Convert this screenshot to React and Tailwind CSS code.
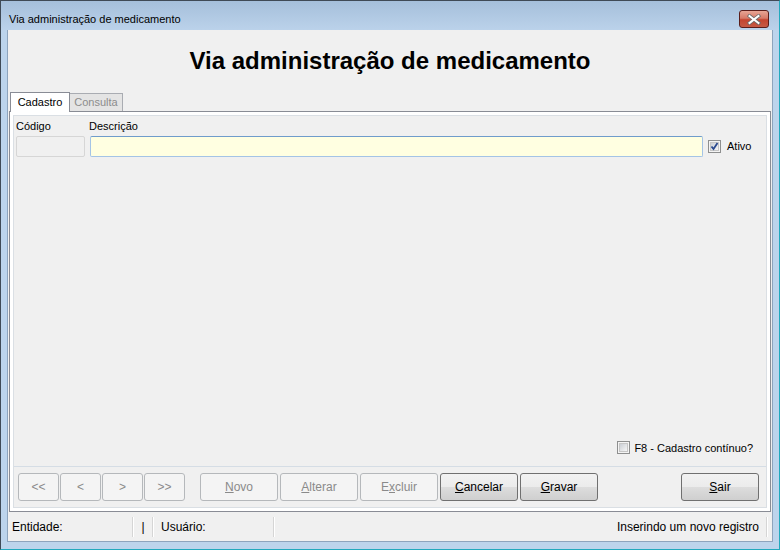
import React from "react";

const font = { fontFamily: '"Liberation Sans", Arial, sans-serif' };

const Checkbox = ({ checked }) => (
    <div className="relative w-[13px] h-[13px] border border-[#8e8f8f] bg-[#f4f4f4] flex items-center justify-center">
        <div className="w-[9px] h-[9px] border border-[#c6c6c6] bg-gradient-to-br from-[#cbcfd5] to-[#f6f6f6]" />
        {checked && (
            <svg className="absolute inset-0" width="11" height="11" viewBox="0 0 11 11">
                <path d="M2.5 5.5 L4.5 8 L8.5 2" fill="none" stroke="#2b4a8f" strokeWidth="1.8" />
            </svg>
        )}
    </div>
);

const Btn = ({ children, w = "w-[78px]", enabled }) => (
    <div
        className={`${w} h-[28px] rounded-[3px] border flex items-center justify-center text-[12px] ${
            enabled
                ? "border-[#707070] text-black bg-[linear-gradient(#f2f2f2_0%,#ebebeb_50%,#dddddd_50%,#cfcfcf_100%)]"
                : "border-[#b5b8bb] text-[#8a8a8a] bg-[#f4f4f4]"
        }`}
    >
        {children}
    </div>
);

const Sep = () => <div className="w-[2px] h-[20px] border-l border-[#d5d5d5] border-r border-r-white" />;

export default function App() {
    return (
        <div className="w-[780px] h-[550px] flex flex-col bg-[#bcd4ec] border-t border-l border-[#3f4a56] border-r border-b border-r-[#22a9bd] border-b-[#22a9bd]" style={font}>
            {/* Title bar */}
            <div className="h-[29px] flex justify-between bg-[linear-gradient(#a5bfdb,#bbd2ea)]">
                <div className="pl-[8px] pt-[11px] text-[11px] leading-[14px] text-black">Via administração de medicamento</div>
                <div className="mt-[9px] mr-[10px] w-[30px] h-[18px] rounded-[3px] border border-[#5a1d1a] bg-[linear-gradient(#e7a595_0%,#d77a68_45%,#c4442f_55%,#c55a45_100%)] flex items-center justify-center">
                    <svg width="16" height="11" viewBox="0 0 16 11">
                        <path d="M3.5 2 L12.5 9 M12.5 2 L3.5 9" stroke="#6a6a6a" strokeWidth="3.6" strokeLinecap="square" />
                        <path d="M3.5 2 L12.5 9 M12.5 2 L3.5 9" stroke="#ffffff" strokeWidth="2" strokeLinecap="square" />
                    </svg>
                </div>
            </div>

            {/* Client area */}
            <div className="flex-1 mx-[6px] mb-[7px] flex flex-col bg-[#f0f0f0] border-l border-r border-b border-[#8da4bd]">
                <div className="h-[62px] flex items-center justify-center text-[24px] font-bold text-black">
                    Via administração de medicamento
                </div>

                {/* Tabs */}
                <div className="h-[19px] flex items-end pl-[2px] relative z-10">
                    <div className="w-[60px] h-[20px] -mb-px bg-white border border-b-0 border-[#898c95] flex items-center justify-center text-[11px] text-black">
                        Cadastro
                    </div>
                    <div className="w-[53px] h-[18px] bg-[#e4e4e4] border border-l-0 border-b-0 border-[#a9acb2] flex items-center justify-center text-[11px] text-[#8c8c8c]">
                        Consulta
                    </div>
                </div>

                {/* Tab panel */}
                <div className="h-[401px] ml-[1px] mr-[1px] border border-[#898c95] bg-white p-[3px] flex">
                    <div className="flex-1 flex flex-col bg-[#f0f0f0] border border-[#dadfe4]">
                        <div className="flex pl-[2px] pt-[3px] text-[11px] text-black">
                            <div className="flex flex-col w-[69px]">
                                <div className="h-[15px] leading-[15px]">Código</div>
                                <div className="mt-[2px] h-[21px] border border-[#d6d6d6] bg-[#f0f0f0] rounded-[2px]" />
                            </div>
                            <div className="flex flex-col ml-[5px]">
                                <div className="h-[15px] leading-[15px] -ml-px">Descrição</div>
                                <div className="mt-[2px] w-[613px] h-[21px] border border-[#a4c4e6] border-t-[#6f9ccb] bg-[#ffffe1] rounded-[2px]" />
                            </div>
                            <div className="flex items-center ml-[5px] mt-[17px] h-[21px] gap-[6px]">
                                <Checkbox checked />
                                <span>Ativo</span>
                            </div>
                        </div>

                        <div className="flex-1" />

                        <div className="flex justify-end items-center gap-[4px] pr-[13px] pb-[10px] text-[11px] text-black">
                            <Checkbox />
                            <span>F8 - Cadastro contínuo?</span>
                        </div>

                        <div className="border-t border-[#d5dde5] pt-[6px] pb-[6px] pl-[4px] pr-[7px] flex items-center">
                            <div className="flex gap-[1px]">
                                <Btn w="w-[41px]">&lt;&lt;</Btn>
                                <Btn w="w-[41px]">&lt;</Btn>
                                <Btn w="w-[41px]">&gt;</Btn>
                                <Btn w="w-[41px]">&gt;&gt;</Btn>
                            </div>
                            <div className="flex gap-[2px] ml-[15px]">
                                <Btn><span><u>N</u>ovo</span></Btn>
                                <Btn><span><u>A</u>lterar</span></Btn>
                                <Btn><span>E<u>x</u>cluir</span></Btn>
                                <Btn enabled><span><u>C</u>ancelar</span></Btn>
                                <Btn enabled><span><u>G</u>ravar</span></Btn>
                            </div>
                            <div className="flex-1" />
                            <Btn enabled><span><u>S</u>air</span></Btn>
                        </div>
                    </div>
                </div>

                {/* Status bar */}
                <div className="flex-1 flex items-center text-[12px] text-black pl-[4px]">
                    <div className="w-[120px]">Entidade:</div>
                    <Sep />
                    <div className="w-[18px] text-center">|</div>
                    <Sep />
                    <div className="w-[119px] pl-[7px]">Usuário:</div>
                    <Sep />
                    <div className="flex-1 text-right pr-[7px]">Inserindo um novo registro</div>
                    <Sep />
                    <div className="w-[4px]" />
                </div>
            </div>
        </div>
    );
}
